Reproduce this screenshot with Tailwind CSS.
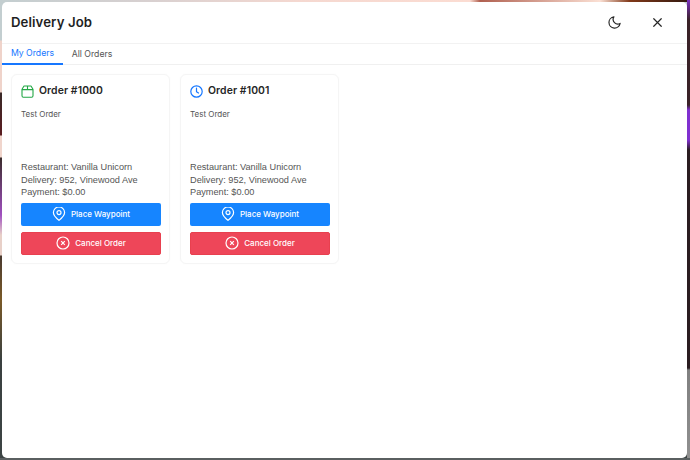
<!DOCTYPE html>
<html lang="en">
<head>
    <meta charset="UTF-8">
    <title>Delivery Job</title>
    <script src="https://cdn.jsdelivr.net/npm/@tailwindcss/browser@4"></script>
</head>
<body class="relative h-[460px] w-[690px] overflow-hidden font-['Inter',sans-serif] bg-[linear-gradient(to_bottom,#c3ced0_0px,#c3ced0_40px,#efd3ca_41px,#efd3ca_92px,#3a2a28_93px,#5a1c20_135px,#f0d5cc_136px,#f0d5cc_157px,#3a2c2c_158px,#a050c0_215px,#e8d0c8_235px,#e8d0c8_255px,#4a3a30_256px,#7a5a28_300px,#3a4040_360px,#3c4444_460px)]">
    <!-- backdrop strips showing round the modal -->
    <div class="absolute inset-x-0 top-0 h-[2px] bg-[linear-gradient(to_right,#c3ced0_0px,#d8d0d0_150px,#f5d8d0_300px,#fbdcd2_470px,#b06050_480px,#fbe0d4_600px,#803818_630px,#301810_690px)]"></div>
    <div class="absolute inset-y-0 right-0 w-[3px] bg-[linear-gradient(to_bottom,#7a30c0_0px,#3a2228_20px,#3a2228_105px,#8030d0_110px,#8030d0_140px,#2a1c20_150px,#2a1c20_368px,#808080_370px,#909090_460px)]"></div>
    <div class="absolute inset-x-0 bottom-0 h-[2px] bg-[#5a5f60]"></div>
    <div class="relative h-full w-full pl-[2px] pr-[3px] py-[2px]">
        <div class="flex h-full flex-col rounded-[5px] bg-white">
            <!-- Header -->
            <div class="flex h-[42px] shrink-0 items-center justify-between border-b border-[#f2f2f2] pl-[9px] pr-[22px]">
                <h1 class="text-[13.2px] font-semibold tracking-[0.1px] text-[#1f1f1f]">Delivery Job</h1>
                <div class="flex items-center gap-[28px]">
                    <svg class="size-[15px]" viewBox="0 0 24 24" fill="none" stroke="#262626" stroke-width="1.9" stroke-linecap="round" stroke-linejoin="round"><path d="M11 3a9 9 0 1 0 10 10.5 7.5 7.5 0 0 1-10-10.5Z"/></svg>
                    <svg class="size-[15px]" viewBox="0 0 24 24" fill="none" stroke="#262626" stroke-width="1.9" stroke-linecap="round"><path d="M6 6l12 12M18 6 6 18"/></svg>
                </div>
            </div>
            <!-- Tabs -->
            <div class="flex h-[21px] shrink-0 border-b border-[#f0f0f0] text-[8.7px] leading-none">
                <div class="flex w-[61px] items-center justify-center border-b-2 border-[#1677ff] text-[#1677ff] -mb-px">My Orders</div>
                <div class="flex w-[58px] items-center justify-center text-[#555555]">All Orders</div>
            </div>
            <!-- Orders -->
            <div class="flex gap-[10px] pl-[9px] pt-[9px]">
                <div class="flex h-[190px] w-[159px] flex-col rounded-[6px] border border-[#f5f5f5] bg-white px-[9px] pt-[9px] shadow-[0_0_3px_rgba(0,0,0,0.02)]">
                    <div class="flex h-[14px] items-center gap-[5px]">
                        <svg class="size-[13px] shrink-0" viewBox="0 0 13 13" fill="none" stroke="#22a745" stroke-width="1.1" stroke-linejoin="round"><path d="M3 1h7l2 3.2v6.6a1.4 1.4 0 0 1-1.4 1.4H2.4A1.4 1.4 0 0 1 1 10.8V4.2Z"/><path d="M1 4.6h11M6.5 1v3.6"/></svg>
                        <span class="text-[10.4px] font-semibold tracking-[0.1px] text-[#262626]">Order #1000</span>
                    </div>
                    <p class="mt-[10px] text-[8px] leading-[12px] text-[#555555]">Test Order</p>
                    <div class="mt-[41px] font-['Liberation_Sans',sans-serif] text-[9.2px] leading-[12.5px] text-[#555555]">
                        <p>Restaurant: Vanilla Unicorn</p>
                        <p>Delivery: 952, Vinewood Ave</p>
                        <p>Payment: $0.00</p>
                    </div>
                    <button class="mt-[4px] flex h-[23px] w-[140px] items-center justify-center gap-[5px] rounded-[2px] bg-[#1685ff] text-[8px] font-medium text-white">
                        <svg class="size-[14px]" viewBox="0 0 14 14" fill="none" stroke="white" stroke-width="1.2"><path d="M7 13.4S1.4 9 1.4 5.6a5.6 5.6 0 0 1 11.2 0C12.6 9 7 13.4 7 13.4Z"/><circle cx="7" cy="5.6" r="2"/></svg>
                        Place Waypoint
                    </button>
                    <button class="mt-[6px] flex h-[23px] w-[140px] items-center justify-center gap-[5px] rounded-[2px] border border-[#e8404f] bg-[#ee4659] text-[8px] font-medium text-white">
                        <svg class="size-[14px]" viewBox="0 0 14 14" fill="none" stroke="white" stroke-width="1.2"><circle cx="7" cy="7" r="6"/><path d="M5.2 5.2l3.6 3.6M8.8 5.2 5.2 8.8"/></svg>
                        Cancel Order
                    </button>
                </div>
                <div class="flex h-[190px] w-[159px] flex-col rounded-[6px] border border-[#f5f5f5] bg-white px-[9px] pt-[9px] shadow-[0_0_3px_rgba(0,0,0,0.02)]">
                    <div class="flex h-[14px] items-center gap-[5px]">
                        <svg class="size-[13px] shrink-0" viewBox="0 0 13 13" fill="none" stroke="#1677ff" stroke-width="1.2" stroke-linecap="round" stroke-linejoin="round"><circle cx="6.5" cy="6.5" r="5.7"/><path d="M6.5 3.2v3.5l2 1.3"/></svg>
                        <span class="text-[10.4px] font-semibold tracking-[0.1px] text-[#262626]">Order #1001</span>
                    </div>
                    <p class="mt-[10px] text-[8px] leading-[12px] text-[#555555]">Test Order</p>
                    <div class="mt-[41px] font-['Liberation_Sans',sans-serif] text-[9.2px] leading-[12.5px] text-[#555555]">
                        <p>Restaurant: Vanilla Unicorn</p>
                        <p>Delivery: 952, Vinewood Ave</p>
                        <p>Payment: $0.00</p>
                    </div>
                    <button class="mt-[4px] flex h-[23px] w-[140px] items-center justify-center gap-[5px] rounded-[2px] bg-[#1685ff] text-[8px] font-medium text-white">
                        <svg class="size-[14px]" viewBox="0 0 14 14" fill="none" stroke="white" stroke-width="1.2"><path d="M7 13.4S1.4 9 1.4 5.6a5.6 5.6 0 0 1 11.2 0C12.6 9 7 13.4 7 13.4Z"/><circle cx="7" cy="5.6" r="2"/></svg>
                        Place Waypoint
                    </button>
                    <button class="mt-[6px] flex h-[23px] w-[140px] items-center justify-center gap-[5px] rounded-[2px] border border-[#e8404f] bg-[#ee4659] text-[8px] font-medium text-white">
                        <svg class="size-[14px]" viewBox="0 0 14 14" fill="none" stroke="white" stroke-width="1.2"><circle cx="7" cy="7" r="6"/><path d="M5.2 5.2l3.6 3.6M8.8 5.2 5.2 8.8"/></svg>
                        Cancel Order
                    </button>
                </div>
            </div>
        </div>
    </div>
</body>
</html>
